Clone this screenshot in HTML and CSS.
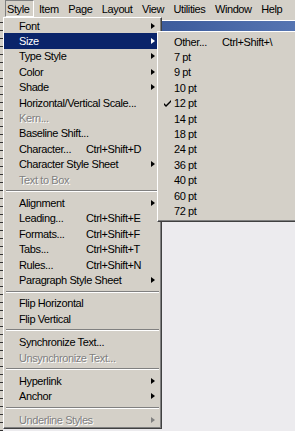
FILE: index.html
```html
<html>
<head>
    <meta charset="utf-8">
    <title>Style menu</title>
    <link rel="stylesheet" href="styles.css">
</head>
<body>
    <div class="menubar">
        <span class="top open">Style</span>
        <span class="top">Item</span>
        <span class="top">Page</span>
        <span class="top">Layout</span>
        <span class="top">View</span>
        <span class="top">Utilities</span>
        <span class="top">Window</span>
        <span class="top">Help</span>
    </div>

    <div class="workspace">
        <div class="ruler"></div>
        <div class="desk">
            <div class="doc">
                <div class="titlebar"></div>
                <div class="page"></div>
            </div>
        </div>
    </div>

    <div class="menu dropdown">
        <div class="item"><span class="label">Font</span><i class="arrow"></i></div>
        <div class="item active"><span class="label">Size</span><i class="arrow"></i></div>
        <div class="item"><span class="label">Type Style</span><i class="arrow"></i></div>
        <div class="item"><span class="label">Color</span><i class="arrow"></i></div>
        <div class="item"><span class="label">Shade</span><i class="arrow"></i></div>
        <div class="item"><span class="label">Horizontal/Vertical Scale...</span></div>
        <div class="item off"><span class="label">Kern...</span></div>
        <div class="item"><span class="label">Baseline Shift...</span></div>
        <div class="item"><span class="label">Character...</span><span class="key">Ctrl+Shift+D</span></div>
        <div class="item"><span class="label">Character Style Sheet</span><i class="arrow"></i></div>
        <div class="item off"><span class="label">Text to Box</span></div>
        <hr class="sep">
        <div class="item"><span class="label">Alignment</span><i class="arrow"></i></div>
        <div class="item"><span class="label">Leading...</span><span class="key">Ctrl+Shift+E</span></div>
        <div class="item"><span class="label">Formats...</span><span class="key">Ctrl+Shift+F</span></div>
        <div class="item"><span class="label">Tabs...</span><span class="key">Ctrl+Shift+T</span></div>
        <div class="item"><span class="label">Rules...</span><span class="key">Ctrl+Shift+N</span></div>
        <div class="item"><span class="label">Paragraph Style Sheet</span><i class="arrow"></i></div>
        <hr class="sep">
        <div class="item"><span class="label">Flip Horizontal</span></div>
        <div class="item"><span class="label">Flip Vertical</span></div>
        <hr class="sep">
        <div class="item"><span class="label">Synchronize Text...</span></div>
        <div class="item off"><span class="label">Unsynchronize Text...</span></div>
        <hr class="sep">
        <div class="item"><span class="label">Hyperlink</span><i class="arrow"></i></div>
        <div class="item"><span class="label">Anchor</span><i class="arrow"></i></div>
        <hr class="sep">
        <div class="item off"><span class="label">Underline Styles</span><i class="arrow"></i></div>
    </div>

    <div class="menu submenu">
        <div class="item"><span class="mark"></span><span class="label">Other...</span><span class="key">Ctrl+Shift+\</span></div>
        <div class="item"><span class="mark"></span><span class="label">7 pt</span></div>
        <div class="item"><span class="mark"></span><span class="label">9 pt</span></div>
        <div class="item"><span class="mark"></span><span class="label">10 pt</span></div>
        <div class="item">
            <span class="mark"><svg width="7" height="7" viewBox="0 0 7 7"><path d="M0 3 L2 5 L7 0 L7 2 L2 7 L0 5 Z" fill="#000"/></svg></span>
            <span class="label">12 pt</span>
        </div>
        <div class="item"><span class="mark"></span><span class="label">14 pt</span></div>
        <div class="item"><span class="mark"></span><span class="label">18 pt</span></div>
        <div class="item"><span class="mark"></span><span class="label">24 pt</span></div>
        <div class="item"><span class="mark"></span><span class="label">36 pt</span></div>
        <div class="item"><span class="mark"></span><span class="label">40 pt</span></div>
        <div class="item"><span class="mark"></span><span class="label">60 pt</span></div>
        <div class="item"><span class="mark"></span><span class="label">72 pt</span></div>
    </div>
</body>
</html>
```

FILE: styles.css
```css
* {box-sizing:border-box;}
html, body {margin:0;height:100%;overflow:hidden;}
body {position:relative;font-family:"Liberation Sans", Arial, sans-serif;font-size:11px;letter-spacing:-0.4px;color:#000;background:#d4d0c8;}

/* menu bar */
.menubar {display:flex;gap:2.5px;height:17px;padding-left:5px;background:#d4d0c8;}
.top {display:flex;align-items:center;height:17px;padding:0 4px 0 1px;border:1px solid transparent;}
.top.open {border-color:#808080 #fff #fff #808080;}

/* area behind the menus */
.workspace {display:flex;height:calc(100% - 17px);}
.ruler {width:3px;background:repeating-linear-gradient(to bottom, #d4d0c8 0 5px, #333 5px 6px, #d4d0c8 6px 8px);}
.desk {flex:1;display:flex;flex-direction:column;padding-top:3px;}
.doc {flex:1;display:flex;flex-direction:column;border-top:1px solid #fff;}
.titlebar {height:10px;background:linear-gradient(to right, #2a4788, #3f5e9e 60%, #5675b2);}
.page {flex:1;background:#ecebee;}

/* menus */
.menu {position:absolute;background:#d4d0c8;border:1px solid;border-color:#fff #404040 #404040 #fff;box-shadow:inset -1px -1px #808080;}
.dropdown {left:3px;top:17px;width:159px;padding:0 0 1px;}
.submenu {left:157px;top:31px;width:150px;padding:2px 0;}

.item {display:flex;align-items:center;height:15.4px;padding:0 6px 0 15px;white-space:nowrap;}
.item .label {min-width:67px;}
.item.active {background:#0a246a;color:#fff;}
.item.off {color:#808080;text-shadow:1px 1px 0 #fff;}

.arrow {margin-left:auto;width:0;height:0;border-left:4px solid #000;border-top:3.5px solid transparent;border-bottom:3.5px solid transparent;}
.active .arrow {border-left-color:#fff;}
.off .arrow {border-left-color:#808080;}

.sep {height:2px;margin:3px 2px;border:0;border-top:1px solid #808080;border-bottom:1px solid #fff;}

.submenu .item {padding-left:6px;}
.submenu .label {min-width:48px;}
.mark {display:flex;align-items:center;width:10px;}
.mark svg {display:block;}
```
